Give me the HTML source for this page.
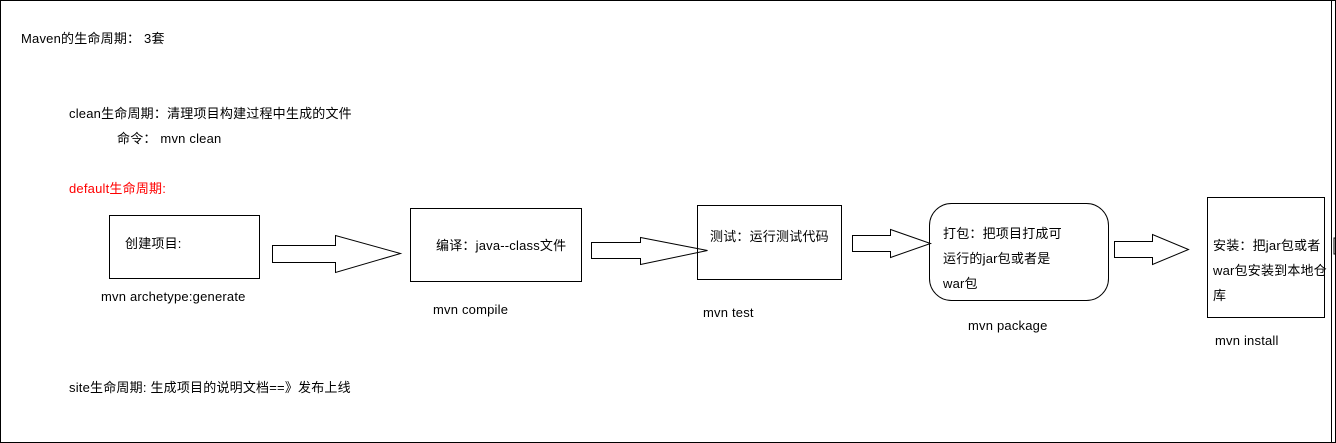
<!DOCTYPE html><html><head><meta charset="utf-8"><style>
body{margin:0;width:1336px;height:443px;overflow:hidden;background:#fff;position:relative;font-family:"Liberation Sans","Noto Sans CJK SC",sans-serif;font-size:13px;color:#000;letter-spacing:0.2px}
.t{position:absolute;white-space:nowrap;line-height:16px}
</style></head><body>
<svg width="1336" height="443" style="position:absolute;left:0;top:0">
<rect x="0.5" y="0.5" width="1335" height="442" fill="none" stroke="#000"/>
<line x1="1331.5" y1="0" x2="1331.5" y2="443" stroke="#000"/>
<rect x="1334" y="238" width="4" height="16" fill="none" stroke="#000"/>
<rect x="109.5" y="215.5" width="150" height="63" fill="none" stroke="#000"/>
<rect x="410.5" y="208.5" width="171" height="73" fill="none" stroke="#000"/>
<rect x="697.5" y="205.5" width="144" height="74" fill="none" stroke="#000"/>
<rect x="929.5" y="203.5" width="179" height="97" rx="22" fill="none" stroke="#000"/>
<rect x="1207.5" y="197.5" width="117" height="120" fill="none" stroke="#000"/>
<polygon points="272.5,245.5 335.5,245.5 335.5,235.5 400.5,253.5 335.5,272.5 335.5,262.5 272.5,262.5" fill="none" stroke="#000"/>
<polygon points="591.5,242.5 640.5,242.5 640.5,237.5 707.5,250.5 640.5,264.5 640.5,258.5 591.5,258.5" fill="none" stroke="#000"/>
<polygon points="852.5,235.5 890.5,235.5 890.5,229.5 930.5,243.5 890.5,257.5 890.5,251.5 852.5,251.5" fill="none" stroke="#000"/>
<polygon points="1114.5,241.5 1152.5,241.5 1152.5,234.5 1188.5,249.5 1152.5,264.5 1152.5,257.5 1114.5,257.5" fill="none" stroke="#000"/>
</svg>
<div class="t" style="left:21px;top:31px">Maven的生命周期： 3套</div>
<div class="t" style="left:69px;top:106px">clean生命周期：清理项目构建过程中生成的文件</div>
<div class="t" style="left:117px;top:131px">命令： mvn clean</div>
<div class="t" style="left:69px;top:181px;color:#f00">default生命周期:</div>
<div class="t" style="left:125px;top:236px">创建项目:</div>
<div class="t" style="left:101px;top:289px">mvn archetype:generate</div>
<div class="t" style="left:436px;top:238px">编译：java--class文件</div>
<div class="t" style="left:433px;top:302px">mvn compile</div>
<div class="t" style="left:710px;top:229px">测试：运行测试代码</div>
<div class="t" style="left:703px;top:305px">mvn test</div>
<div class="t" style="left:943px;top:221px;line-height:25px">打包：把项目打成可<br>运行的jar包或者是<br>war包</div>
<div class="t" style="left:968px;top:318px">mvn package</div>
<div class="t" style="left:1213px;top:233px;line-height:25px">安装：把jar包或者<br>war包安装到本地仓<br>库</div>
<div class="t" style="left:1215px;top:333px">mvn install</div>
<div class="t" style="left:69px;top:380px">site生命周期: 生成项目的说明文档==》发布上线</div>
</body></html>
